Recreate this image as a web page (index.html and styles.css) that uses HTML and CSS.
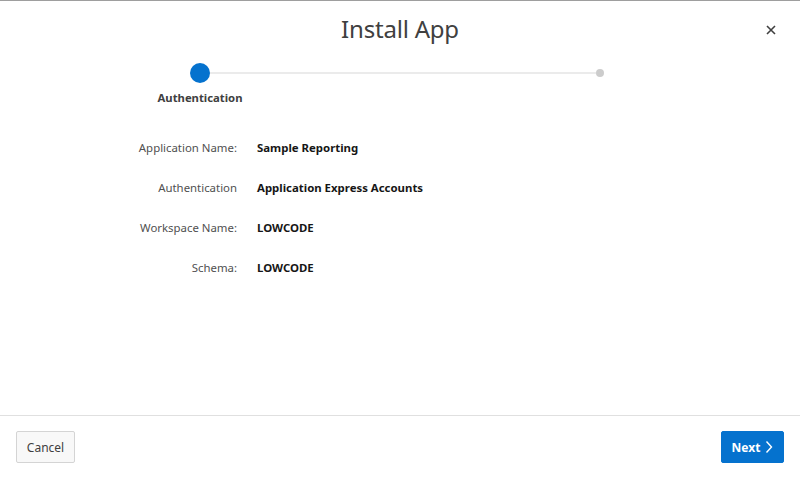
FILE: index.html
```html
<!DOCTYPE html>
<html>
<head>
<meta charset="utf-8">
<link rel="stylesheet" href="styles.css">
</head>
<body>
<div class="dialog">
  <header class="head">
    <h1 class="title">Install App</h1>
    <button class="close" aria-label="Close">
      <svg width="10" height="10" viewBox="0 0 10 10"><path d="M1 1L9 9M9 1L1 9" stroke="#404040" stroke-width="1.6" fill="none"/></svg>
    </button>
  </header>
  <div class="steps">
    <div class="track">
      <span class="dot-active"></span>
      <span class="line"></span>
      <span class="dot-end"></span>
    </div>
    <div class="step-label">Authentication</div>
  </div>
  <div class="form">
    <div class="row"><span class="lbl">Application Name:</span><span class="val">Sample Reporting</span></div>
    <div class="row"><span class="lbl">Authentication</span><span class="val">Application Express Accounts</span></div>
    <div class="row"><span class="lbl">Workspace Name:</span><span class="val">LOWCODE</span></div>
    <div class="row"><span class="lbl">Schema:</span><span class="val">LOWCODE</span></div>
  </div>
  <footer class="foot">
    <button class="btn cancel">Cancel</button>
    <button class="btn next">Next
      <svg class="chev" width="8" height="14" viewBox="0 0 8 14"><path d="M1.5 1.5L6.5 7L1.5 12.5" stroke="#fff" stroke-width="1.4" fill="none"/></svg>
    </button>
  </footer>
</div>
</body>
</html>
```
FILE: styles.css
```css
html, body { margin: 0; padding: 0; }
body {
  width: 800px; height: 479px; overflow: hidden; background: #fff;
  font-family: "Noto Sans", "Open Sans", sans-serif; color: #262626;
}
.dialog {
  height: 479px; box-sizing: border-box;
  border-top: 1px solid #9e9e9e;
  display: flex; flex-direction: column;
}
.head { position: relative; height: 58px; display: flex; justify-content: center; align-items: center; }
.title { margin: 0; font-size: 24px; font-weight: 400; color: #404040; letter-spacing: -0.2px; margin-top: -3px; }
.close {
  position: absolute; right: 23px; top: 23px; width: 12px; height: 12px;
  border: 0; padding: 0; background: none; display: flex; align-items: center; justify-content: center;
}
.steps { padding-left: 150px; width: 460px; }
.track { display: flex; align-items: center; height: 20px; margin-top: 4px; }
.dot-active { width: 20px; height: 20px; border-radius: 50%; background: #0572ce; margin-left: 40px; flex: none; }
.line { height: 2px; background: #ebebeb; flex: 1; }
.dot-end { width: 8px; height: 8px; border-radius: 50%; background: #cccccc; flex: none; margin-right: 6px; }
.step-label { width: 100px; text-align: center; font-size: 11.3px; font-weight: 700; color: #404040; margin-top: 7px; }
.form { margin-top: 33px; display: flex; flex-direction: column; gap: 21px; }
.row { display: flex; align-items: center; font-size: 11.4px; height: 19px; }
.lbl { width: 237px; text-align: right; color: #505050; }
.val { margin-left: 20px; font-weight: 700; color: #161616; }
.foot {
  margin-top: auto; border-top: 1px solid #e0e0e0; height: 64px;
  display: flex; justify-content: space-between; align-items: flex-start;
  padding: 15px 16px 0; box-sizing: border-box;
}
.btn { height: 32px; border-radius: 2px; font-family: inherit; font-size: 12px; padding: 0; display: flex; align-items: center; gap: 5px; }
.cancel { background: #f8f8f8; border: 1px solid #d4d4d4; color: #404040; width: 59px; justify-content: center; }
.next { background: #0572ce; border: 1px solid #0572ce; color: #fff; font-weight: 700; width: 63px; justify-content: center; }
.chev { flex: none; }
```
